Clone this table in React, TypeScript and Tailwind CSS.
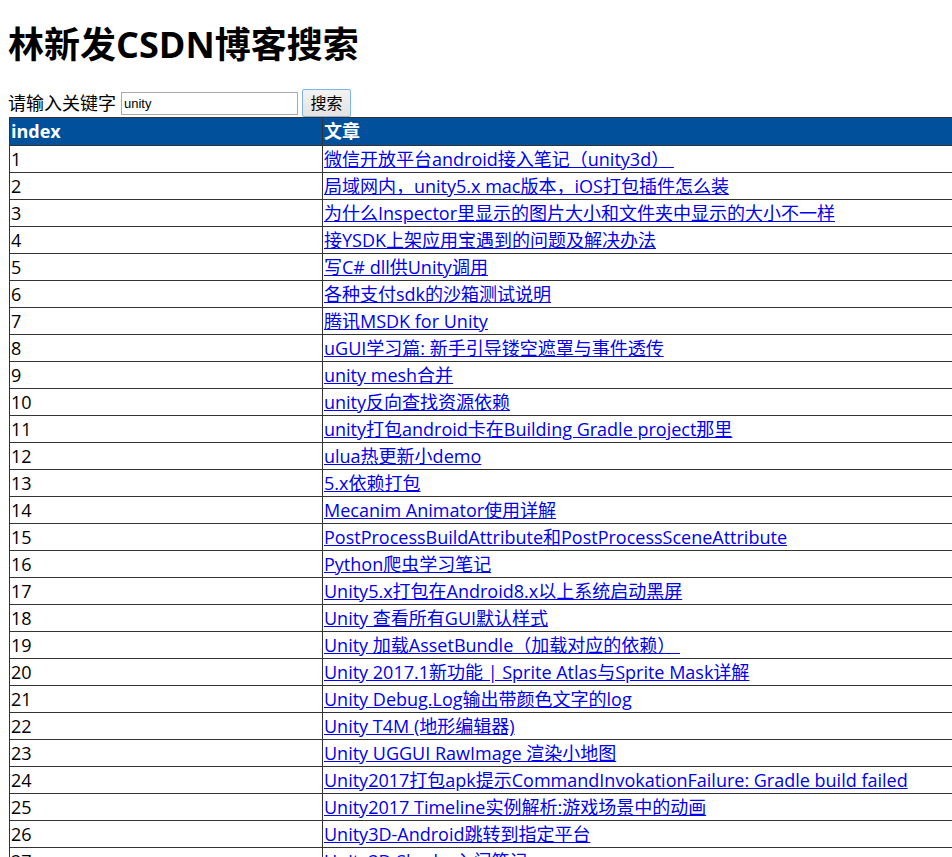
import React, { useState } from "react";

const posts = [
  "微信开放平台android接入笔记（unity3d） ",
  "局域网内，unity5.x mac版本，iOS打包插件怎么装",
  "为什么Inspector里显示的图片大小和文件夹中显示的大小不一样",
  "接YSDK上架应用宝遇到的问题及解决办法",
  "写C# dll供Unity调用",
  "各种支付sdk的沙箱测试说明",
  "腾讯MSDK for Unity",
  "uGUI学习篇: 新手引导镂空遮罩与事件透传",
  "unity mesh合并",
  "unity反向查找资源依赖",
  "unity打包android卡在Building Gradle project那里",
  "ulua热更新小demo",
  "5.x依赖打包",
  "Mecanim Animator使用详解",
  "PostProcessBuildAttribute和PostProcessSceneAttribute",
  "Python爬虫学习笔记",
  "Unity5.x打包在Android8.x以上系统启动黑屏",
  "Unity 查看所有GUI默认样式",
  "Unity 加载AssetBundle（加载对应的依赖） ",
  "Unity 2017.1新功能 | Sprite Atlas与Sprite Mask详解",
  "Unity Debug.Log输出带颜色文字的log",
  "Unity T4M (地形编辑器)",
  "Unity UGGUI RawImage 渲染小地图",
  "Unity2017打包apk提示CommandInvokationFailure: Gradle build failed",
  "Unity2017 Timeline实例解析:游戏场景中的动画",
  "Unity3D-Android跳转到指定平台",
  "Unity3D Shader入门笔记",
  "Unity3D 协程的使用",
];

export default function App() {
  const [keyword, setKeyword] = useState("unity");
  return (
    <div className="p-2 text-black font-['Open_Sans','Noto_Sans_CJK_SC',sans-serif]">
      <h1 className="mt-[16px] mb-[23px] text-[36px] font-bold leading-[42px]">
        林新发CSDN博客搜索
      </h1>

      {/* search bar */}
      <div className="flex items-center h-[28px] text-[18px]">
        <span className="leading-[28px]">请输入关键字</span>
        <input
          value={keyword}
          onChange={(e) => setKeyword(e.target.value)}
          className="ml-[5px] w-[177px] h-[23px] px-[2px] border border-[#a9a9a9] text-[13px] font-['Liberation_Sans',sans-serif] outline-none"
        />
        <button className="ml-[4px] w-[49px] h-[28px] border border-[#7eb4ea] rounded-[2px] bg-gradient-to-b from-[#f3f3f3] to-[#e3e3e3] text-[16px] leading-none">
          搜索
        </button>
      </div>

      {/* results */}
      <table className="ml-px w-[1000px] border-collapse border border-[#333] text-[18px] text-left">
        <thead>
          <tr className="bg-[#00509c] text-white">
            <th className="w-[313px] border border-[#333] px-px py-0 leading-[27px] font-bold">index</th>
            <th className="border border-[#333] px-px py-0 leading-[27px] font-bold">文章</th>
          </tr>
        </thead>
        <tbody>
          {posts.map((title, i) => (
            <tr key={i}>
              <td className="border border-[#333] px-px py-0 leading-[26px]">{i + 1}</td>
              <td className="border border-[#333] px-px py-0 leading-[26px] whitespace-pre">
                <a href="#" className="text-[#0000ee] underline">
                  {title}
                </a>
              </td>
            </tr>
          ))}
        </tbody>
      </table>
    </div>
  );
}
